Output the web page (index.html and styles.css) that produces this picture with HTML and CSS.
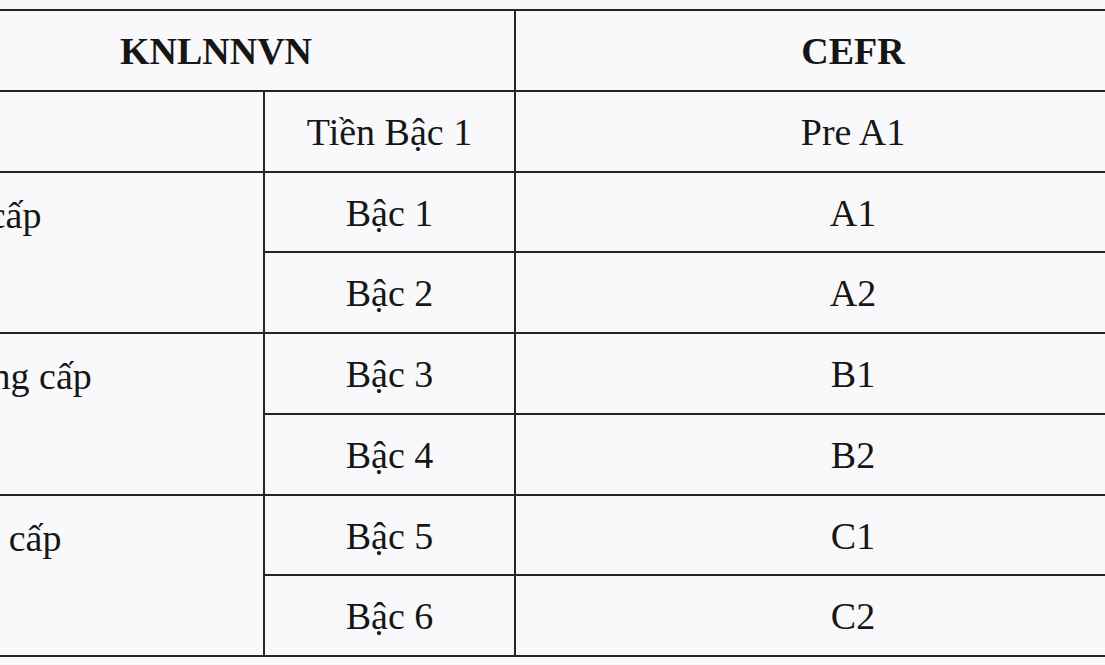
FILE: index.html
```html
<!DOCTYPE html>
<html lang="vi">
<head>
<meta charset="utf-8">
<title>KNLNNVN – CEFR</title>
<link rel="stylesheet" href="styles.css">
</head>
<body>
<div class="sheet">
<table class="levels">
  <colgroup>
    <col class="c-group">
    <col class="c-level">
    <col class="c-cefr">
  </colgroup>
  <thead>
    <tr>
      <th colspan="2">KNLNNVN</th>
      <th>CEFR</th>
    </tr>
  </thead>
  <tbody>
    <tr>
      <td class="group"></td>
      <td>Tiền Bậc 1</td>
      <td>Pre A1</td>
    </tr>
    <tr>
      <td class="group" rowspan="2">Sơ cấp</td>
      <td>Bậc 1</td>
      <td>A1</td>
    </tr>
    <tr>
      <td>Bậc 2</td>
      <td>A2</td>
    </tr>
    <tr>
      <td class="group" rowspan="2">Trung cấp</td>
      <td>Bậc 3</td>
      <td>B1</td>
    </tr>
    <tr>
      <td>Bậc 4</td>
      <td>B2</td>
    </tr>
    <tr>
      <td class="group" rowspan="2">Cao cấp</td>
      <td>Bậc 5</td>
      <td>C1</td>
    </tr>
    <tr>
      <td>Bậc 6</td>
      <td>C2</td>
    </tr>
  </tbody>
</table>
</div>
</body>
</html>
```

FILE: styles.css
```css
html, body {
  margin: 0;
  padding: 0;
  background: #f9f9fb;
  overflow: hidden;
}

.sheet {
  width: 1105px;
  height: 665px;
  overflow: hidden;
  padding-top: 9px;
  box-sizing: border-box;
}

.levels {
  border-collapse: collapse;
  table-layout: fixed;
  width: 1274px;
  margin-left: -84px;
  font-family: "Liberation Serif", "Times New Roman", serif;
  font-size: 38px;
  color: #161616;
}

.c-group { width: 347px; }
.c-level { width: 251px; }
.c-cefr  { width: 676px; }

.levels th,
.levels td {
  border: 2px solid #262628;
  height: 80.75px;
  padding: 3px 0 0 0;
  text-align: center;
  vertical-align: middle;
  line-height: 1.15;
  box-sizing: border-box;
}

.levels th {
  font-weight: bold;
}

.levels td.group {
  text-align: left;
  vertical-align: top;
  padding: 21px 0 0 20px;
}
```
